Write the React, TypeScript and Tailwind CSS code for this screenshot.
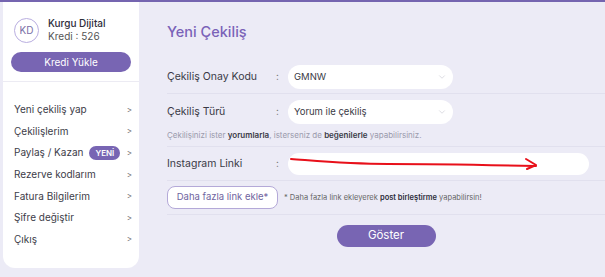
import { ChevronDown } from "lucide-react";

const MENU = [
  { label: "Yeni çekiliş yap" },
  { label: "Çekilişlerim" },
  { label: "Paylaş / Kazan", badge: "YENİ" },
  { label: "Rezerve kodlarım" },
  { label: "Fatura Bilgilerim" },
  { label: "Şifre değiştir" },
  { label: "Çıkış" },
];

function Sidebar() {
  return (
    <aside className="ml-[3px] h-[266px] w-[136px] shrink-0 rounded-b-xl bg-white">
      <div className="border-b border-[#ecebf3] px-[8px] pb-[9px] pt-[15px]">
        <div className="flex items-center gap-[9px] pl-[3px]">
          <div className="flex h-[25px] w-[25px] items-center justify-center rounded-full border border-[#b9aee0] text-[10px] text-[#7a6fa6]">
            KD
          </div>
          <div className="leading-[13px]">
            <div className="text-[10px] font-medium text-[#2d2d3a]">Kurgu Dijital</div>
            <div className="text-[10px] text-[#555]">Kredi : 526</div>
          </div>
        </div>
        <button className="mt-[9px] h-[20px] w-full rounded-full bg-[#7865b3] text-[10px] text-white">
          Kredi Yükle
        </button>
      </div>
      <ul className="pt-[17px]">
        {MENU.map((item) => (
          <li
            key={item.label}
            className="flex h-[21.6px] items-center justify-between pl-[11px] pr-[7px] text-[10px] text-[#3c3c48]"
          >
            <span className="flex items-center gap-[6px]">
              {item.label}
              {item.badge && (
                <span className="flex h-[14px] items-center rounded-full bg-[#7865b3] px-[6px] text-[8px] font-semibold text-white">
                  {item.badge}
                </span>
              )}
            </span>
            <span className="text-[8px] text-[#666]">&gt;</span>
          </li>
        ))}
      </ul>
    </aside>
  );
}

function Row({ label, children }: { label: string; children: React.ReactNode }) {
  return (
    <div className="flex items-center">
      <span className="w-[109px] text-[10.5px] text-[#3a3a46]">{label}</span>
      <span className="w-[12px] text-[10px] text-[#777]">:</span>
      {children}
    </div>
  );
}

function Select({ value }: { value: string }) {
  return (
    <div className="flex h-[24px] w-[165px] items-center justify-between rounded-full bg-white pl-[6px] pr-[6px] text-[9.5px] text-[#3a3a46]">
      {value}
      <ChevronDown className="h-[10px] w-[10px] text-[#c8c8d2]" strokeWidth={1.5} />
    </div>
  );
}

export default function App() {
  return (
    <div
      className="flex h-[277px] w-[605px] overflow-hidden border-t-2 border-[#7565b0] bg-[#ecebf6]"
      style={{ fontFamily: "Inter, 'Noto Sans', sans-serif" }}
    >
      <Sidebar />
      <main className="flex-1 pl-[28px]">
        <h1 className="mt-[19px] text-[14.5px] font-medium text-[#7a62b8]">Yeni Çekiliş</h1>

        <div className="mt-[22px] border-b border-[#e1e0ee] pb-[4px]">
          <Row label="Çekiliş Onay Kodu">
            <Select value="GMNW" />
          </Row>
        </div>

        <div className="border-b border-[#e1e0ee] pb-[5px] pt-[6px]">
          <Row label="Çekiliş Türü">
            <Select value="Yorum ile çekiliş" />
          </Row>
          <p className="mt-[5px] text-[8px] text-[#9a9aac]">
            Çekilişinizi ister <b className="font-semibold text-[#3a3a46]">yorumlarla</b>, isterseniz de{" "}
            <b className="font-semibold text-[#3a3a46]">beğenilerle</b> yapabilirsiniz.
          </p>
        </div>

        <div className="border-b border-[#e1e0ee] pb-[5px] pt-[6px]">
          <Row label="Instagram Linki">
            <div className="relative h-[22px] w-[301px] rounded-full bg-white">
              <svg className="absolute left-0 top-0" width="260" height="22" viewBox="0 0 260 22" fill="none">
                <path
                  d="M3 6 C 30 8, 60 11, 100 11 C 150 11, 200 12, 248 13"
                  stroke="#e8101a"
                  strokeWidth="2"
                  strokeLinecap="round"
                />
                <path d="M238 6 L248 12 L239 16" stroke="#e8101a" strokeWidth="2" strokeLinecap="round" strokeLinejoin="round" />
              </svg>
            </div>
          </Row>
        </div>

        <div className="flex items-center gap-[6px] border-b border-[#e1e0ee] pb-[5px] pt-[5px]">
          <button className="h-[23px] w-[111px] rounded-lg border border-[#b4a9d8] bg-white text-[9.5px] text-[#6f64a0]">
            Daha fazla link ekle*
          </button>
          <span className="text-[7.5px] text-[#666]">
            * Daha fazla link ekleyerek <b className="font-semibold text-[#2d2d3a]">post birleştirme</b> yapabilirsin!
          </span>
        </div>

        <div className="flex justify-center pt-[10px]">
          <button className="h-[22px] w-[99px] rounded-full bg-[#7865b3] text-[11.5px] text-white">
            Göster
          </button>
        </div>
      </main>
    </div>
  );
}
